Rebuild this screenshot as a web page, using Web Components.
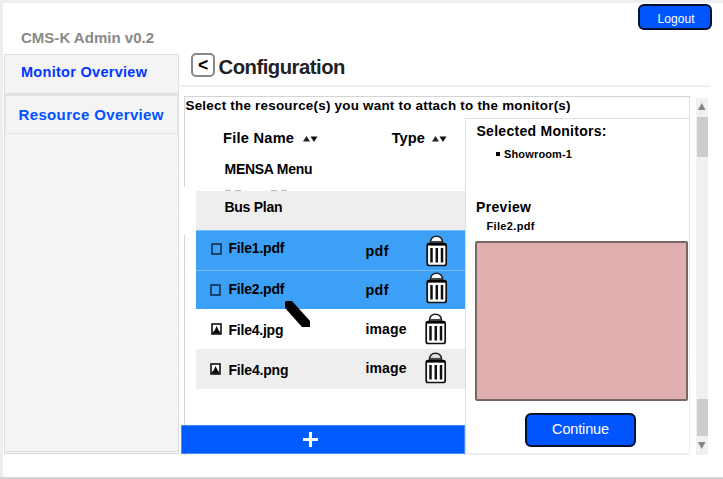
<!DOCTYPE html>
<html lang="en">
<head>
<meta charset="utf-8">
<title>CMS-K Admin</title>
<style>
html,body{margin:0;height:100%;overflow:hidden;background:#fff;font-family:"Liberation Sans",Arial,sans-serif}
</style>
</head>
<body>
<cms-app></cms-app>
<script>
function define(name, html, setup) {
  const tpl = document.createElement('template');
  tpl.innerHTML = html;
  customElements.define(name, class extends HTMLElement {
    connectedCallback() {
      if (this.shadowRoot) return;
      const root = this.attachShadow({mode: 'open'});
      root.append(tpl.content.cloneNode(true));
      if (setup) setup(this, root);
    }
  });
}

/* Single line of text; "w" is the advance width that tracking spreads it over. */
define('ui-label', `<style>
:host{display:block;flex:none;white-space:nowrap;line-height:20px;height:20px;font-weight:700;color:#000;width:max-content}
:host([plain]){font-weight:400}
span{display:inline-block}
</style><span></span>`, (el, root) => {
  const s = root.querySelector('span');
  s.textContent = el.getAttribute('text');
  s.style.fontSize = el.getAttribute('size') + 'px';
  const w = +el.getAttribute('w');
  if (w) s.style.letterSpacing = ((w - s.getBoundingClientRect().width) / (s.textContent.length - 1)).toFixed(3) + 'px';
});

define('sort-arrows', `<style>:host{display:block;flex:none;width:15px;height:8px}svg{display:block}</style>
<svg width="15" height="8"><path d="M0 6.500 3.500 1 7 6.500Z" fill="#222"/><path d="M7.5 1.5H14.5L11 7Z" fill="#111"/></svg>`);

define('trash-icon', `<style>:host{display:block;flex:none;width:22px;height:32px}svg{display:block}</style>
<svg width="22" height="32" viewBox="0 0 22 32"><path d="M4.5 8C4.5 3.7 7 1.3 10.5 1.3S16.500 3.700 16.500 8Z" fill="var(--cap,#fff)" stroke="#222" stroke-width="1.600"/>
<path d="M5 6.700H16" stroke="#444" stroke-width="1.500"/>
<rect x="1.200" y="8.500" width="19" height="22" rx="2" fill="#fff" stroke="#111" stroke-width="1.700"/>
<path d="M1.500 9.300H20" stroke="#000" stroke-width="2.600"/><path d="M5.500 13V27.500M10.800 13V27.500M16 13V27.500" stroke="#111" stroke-width="2.500"/></svg>`);

define('file-icon', `<style>:host{display:block;flex:none;width:11px;height:12px}svg{display:block}path{display:none}:host([kind=image]) path{display:block}:host([kind=image]) rect{fill:#fff;stroke:#111}</style>
<svg width="11" height="12"><rect x="1" y="1" width="9" height="10" fill="none" stroke="#123052" stroke-width="1.600"/><path d="M2 10.500V9L4 7 5.500 3 7.500 7 9 9V10.500Z" fill="#000"/></svg>`);

define('side-nav', `<style>
:host{display:block;width:175px;box-sizing:border-box}
.title{height:54px;box-sizing:border-box;padding:23px 0 0 17px}
.list{box-sizing:border-box;height:400px;border:1px solid #dedede;border-bottom:3px double #ddd;background:repeating-linear-gradient(#f4f4f4 0 39px,#f6f6f6 39px 40px)}
.item{box-sizing:border-box;height:40px;border-bottom:2px solid #e0e0e0;display:flex;align-items:flex-start}
.item+.item{height:39px;border:1px solid #e4e4e4}
</style>
<div class="title"><ui-label text="CMS-K Admin v0.2" size="15" w="133" style="margin-top:5px;color:#888"></ui-label></div>
<div class="list"><div class="item"><ui-label text="Monitor Overview" size="14.5" w="126" style="margin:7px 0 0 16px;color:#0036ff"></ui-label></div>
<div class="item"><ui-label text="Resource Overview" size="15" w="145" style="margin:9px 0 0 12.500px;color:#0052ff"></ui-label></div></div>`);

define('ui-button', `<style>
:host{display:flex;box-sizing:border-box;flex:none;justify-content:center;background:#0055ff;border:2px solid #00102e;border-radius:6px}
</style><slot></slot>`);

define('file-row', `<style>
:host{display:grid;grid-template-columns:32.500px 137px 59px 40.500px;height:40px;box-sizing:border-box;align-items:start}
:host([alt]){background:#eee}
:host([selected]){background:#3da0f7;border-top:1px solid #78bdfa}
</style><slot></slot>`);

define('file-table', `<style>
:host{display:flex;flex-direction:column;width:281px;height:337px}
.head{display:flex;height:38px;margin-left:39px}
.rows{margin-left:12px;width:269px}
.mark{height:2px;display:flex;gap:4px;padding-left:29px;height:1px}
.mark i{width:6px;height:1px;background:#bbb}
.mark i:nth-child(3){margin-left:26px}
.add{margin:auto 0 1px -3px;box-sizing:border-box;height:29px;width:284px;background:#005cff;border:1px solid #4988f2;display:grid;place-items:center}
.add svg{margin-left:-25px}
.pen{position:absolute;left:285px;top:301px}
</style>
<div class="head"><ui-label text="File Name" size="14.6" w="71" style="margin-top:10px"></ui-label><sort-arrows style="margin:17px 0 0 9px"></sort-arrows>
<ui-label text="Type" size="14.6" w="33" style="margin:10px 0 0 73.500px"></ui-label><sort-arrows style="margin:17px 0 0 7.500px"></sort-arrows></div>
<div class="rows">
<file-row style="height:34px"><span></span><ui-label text="MENSA Menu" size="14" w="88" style="margin:3px 0 0 -4px"></ui-label></file-row>
<div class="mark"><i></i><i></i><i></i><i></i></div>
<file-row alt style="height:39px"><span></span><ui-label text="Bus Plan" size="14" w="58" style="margin:6px 0 0 -4px"></ui-label></file-row>
<file-row selected><file-icon style="margin:12px 0 0 15px"></file-icon><ui-label text="File1.pdf" size="14" w="56" style="margin-top:7px"></ui-label><ui-label text="pdf" size="14.3" w="23" style="margin-top:10px"></ui-label><trash-icon style="margin:4px 0 0 1px"></trash-icon></file-row>
<file-row selected style="height:39px"><file-icon style="margin:13px 0 0 14px"></file-icon><ui-label text="File2.pdf" size="14" w="56" style="margin-top:8px"></ui-label><ui-label text="pdf" size="14.3" w="23" style="margin-top:9px"></ui-label><trash-icon style="margin:1px 0 0 1px"></trash-icon></file-row>
<file-row><file-icon kind="image" style="margin:14px 0 0 15px"></file-icon><ui-label text="File4.jpg" size="14" w="55" style="margin-top:11px"></ui-label><ui-label text="image" size="14" w="41" style="margin-top:10px"></ui-label><trash-icon style="margin:4px 0 0 0"></trash-icon></file-row>
<file-row alt><file-icon kind="image" style="margin:14px 0 0 14px"></file-icon><ui-label text="File4.png" size="14" w="60" style="margin-top:11px"></ui-label><ui-label text="image" size="14" w="41" style="margin-top:9px"></ui-label><trash-icon style="margin:3px 0 0 0;--cap:#ddd"></trash-icon></file-row>
</div>
<div class="add"><svg width="15" height="15"><path d="M0 7.500H15M7.500 0V15" stroke="#fff" stroke-width="3"/></svg></div>
<svg class="pen" width="26" height="27"><path d="M0 1 1 0H7L25 20V26H17L1 8 0 6Z" fill="#000"/></svg>`);

define('preview-panel', `<style>
:host{display:flex;flex-direction:column;box-sizing:border-box;width:225px;height:337px;border-left:1px solid #ddd;border-top:1px solid #ddd}
.mon{display:flex;align-items:flex-start;margin:2px 0 0 30px;height:20px}
.mon i{width:4px;height:4px;background:#000;margin:9px 4px 0 0}
.pic{box-sizing:border-box;margin:6px 0 0 9px;width:213px;height:160px;background:#e0afaf;border:2px solid #776767;border-radius:2px}
</style>
<ui-label text="Selected Monitors:" size="14" w="130" style="margin:2px 0 0 10.500px"></ui-label>
<div class="mon"><i></i><ui-label text="Showroom-1" size="11" w="68"></ui-label></div>
<ui-label text="Preview" size="14" w="55" style="margin:34px 0 0 10px"></ui-label>
<ui-label text="File2.pdf" size="11" w="48" style="margin:-2px 0 0 20.500px"></ui-label>
<div class="pic"></div>
<ui-button style="width:111px;height:34px;margin:12px 0 0 59px"><ui-label plain text="Continue" size="14.5" w="57" style="color:#fff;margin-top:4px"></ui-label></ui-button>`);

define('scroll-bar', `<style>
:host{display:flex;flex-direction:column;align-items:center;box-sizing:border-box;width:12px;height:357px;background:#f0f0f0}
svg{flex:none}i{width:11px;background:#cdcdcd}
</style><svg width="12" height="19"><path d="M2 12 5.700 5 9.500 12Z" fill="#858585"/></svg><i style="height:40px"></i><i style="height:242px;background:none"></i><i style="height:37px"></i><svg width="12" height="19"><path d="M2 6H9.500L5.700 13Z" fill="#858585"/></svg>`);

define('resource-picker', `<style>
:host{display:flex;gap:6px;height:359px}
.panel{width:506px;height:359px;box-sizing:border-box;background:linear-gradient(#d4d4d4 0 0) 0 0/100% 1px no-repeat,linear-gradient(#d6d6d6 0 91px,#fff 91px 139px,#d6d6d6 139px) 0 0/1px 100% no-repeat,linear-gradient(#ddd,#eee) 100% 0/1px 100% no-repeat,linear-gradient(#eee 0 0) 100% 100%/225px 2px no-repeat}
.lead{height:22px;box-sizing:border-box;display:flex}
.cols{display:flex}
</style>
<div class="panel"><div class="lead"><ui-label text="Select the resource(s) you want to attach to the monitor(s)" size="13.4" w="385" style="margin:-1px 0 0 1.500px"></ui-label></div>
<div class="cols"><file-table></file-table><preview-panel></preview-panel></div></div>
<scroll-bar style="margin-top:2px"></scroll-bar>`);

define('cms-app', `<style>
:host{display:flex;box-sizing:border-box;width:723px;height:479px;border-top:3px solid #eee;border-bottom:2px solid #d5d5d5;background:linear-gradient(90deg,#eee 3px,#fff 3px);padding-left:4px}
side-nav{margin-top:-3px}
main{display:flex;flex-direction:column;width:540px}
header{display:flex;height:84px;box-sizing:border-box;border-bottom:2px solid #f0f0f0;width:532px;margin-left:-1px}
.back{box-sizing:border-box;width:24px;height:24px;border:2px solid #888;border-radius:5px;display:flex;justify-content:center;margin:50px 0 0 13px}
</style>
<side-nav></side-nav>
<main><header><div class="back"><ui-label text="&lt;" size="17.5" style="margin-top:0"></ui-label></div><ui-label text="Configuration" size="20.3" w="127" style="margin:54px 0 0 3.500px;color:#222"></ui-label>
<ui-button style="width:74px;height:26px;margin:1px -2px 0 auto"><ui-label plain text="Logout" size="12" w="37" style="color:#fff;margin:2px 0 0 2px"></ui-label></ui-button></header>
<resource-picker style="margin:9px 0 0 5px"></resource-picker></main>`);
</script>
</body>
</html>
